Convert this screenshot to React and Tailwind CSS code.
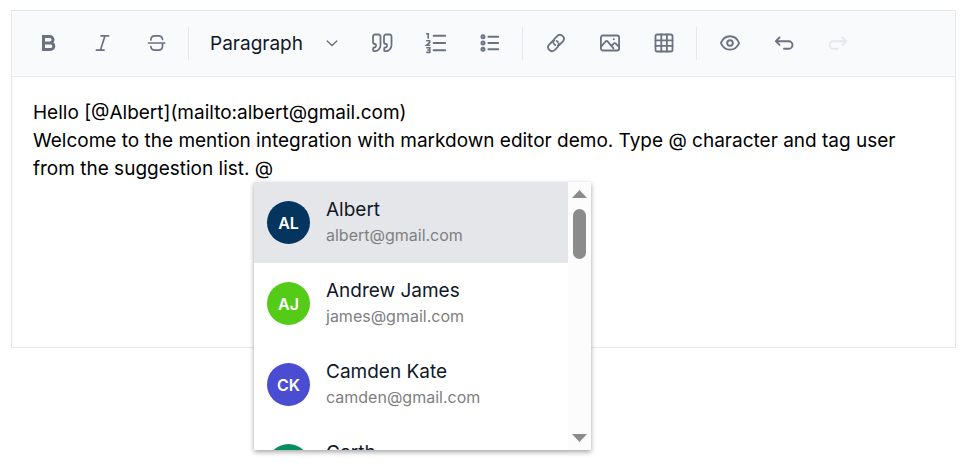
import React from "react";

function Icon({ children, width = 2 }) {
  return (
    <svg
      className="size-6"
      viewBox="0 0 24 24"
      fill="none"
      stroke="currentColor"
      strokeWidth={width}
      strokeLinecap="round"
      strokeLinejoin="round"
      aria-hidden="true"
    >
      {children}
    </svg>
  );
}

function ToolButton({ label, disabled, children }) {
  return (
    <button
      type="button"
      aria-label={label}
      title={label}
      disabled={disabled}
      className="flex h-11 w-11 shrink-0 items-center justify-center rounded-md text-gray-500 disabled:text-gray-200"
    >
      {children}
    </button>
  );
}

function Separator() {
  return <div className="h-[33px] w-0.5 shrink-0 border-l border-gray-200" />;
}

function Toolbar() {
  return (
    <div className="border-b border-gray-200">
      <div
        className="flex h-[65px] items-center gap-2.5 overflow-hidden rounded-md bg-[#f9fafc] px-3.5 pb-px"
        role="toolbar"
        aria-label="Formatting"
      >
        <ToolButton label="Bold">
          <Icon width={3}>
            <path d="M7.5 5.500h6.300a3.200 3.200 0 0 1 0 6.400H7.500zM7.500 11.900h7a3.300 3.300 0 0 1 0 6.600h-7z" strokeLinejoin="miter" />
          </Icon>
        </ToolButton>
        <ToolButton label="Italic">
          <Icon width={1.7}>
            <path d="M11 4.8h7.600M6.400 19.2h7.600M15 4.8l-4.6 14.4" />
          </Icon>
        </ToolButton>
        <ToolButton label="Strikethrough">
          <Icon width={1.7}>
            <path d="M4.500 12h16.200M6.900 9V8.400a3.600 3.600 0 0 1 3.600-3.600h4.400a3.600 3.600 0 0 1 3.600 3.600M6.900 15.600a3.600 3.600 0 0 0 3.600 3.600h4.400a3.600 3.600 0 0 0 3.600-3.600V12.400" />
          </Icon>
        </ToolButton>
        <Separator />
        <div className="relative h-11 w-[150px] shrink-0">
          <select
            aria-label="Paragraph format"
            defaultValue="Paragraph"
            className="h-full w-full appearance-none bg-transparent pt-px pl-2.5 text-[19px] leading-7 text-gray-900 outline-none"
          >
            <option>Paragraph</option>
            <option>Heading 1</option>
            <option>Heading 2</option>
          </select>
          <svg
            className="pointer-events-none absolute top-4 right-3 h-3 w-3 text-gray-500"
            viewBox="0 0 12 12"
            fill="none"
            stroke="currentColor"
            strokeWidth="1.4"
            strokeLinecap="round"
            strokeLinejoin="round"
            aria-hidden="true"
          >
            <path d="M1.200 4l4.800 4.500L10.800 4" />
          </svg>
        </div>
        <ToolButton label="Quote">
          <Icon width={1.8}>
            <path d="M16 3.500a2 2 0 0 0-2 2v5.500a2 2 0 0 0 2 2 1 1 0 0 1 1 1v.8a1.700 1.700 0 0 1-1.800 1.700 1 1 0 0 0-1 1v1.700a1 1 0 0 0 1 1 6 6 0 0 0 6.300-6V5.500a2 2 0 0 0-2-2z" />
            <path d="M5 3.500a2 2 0 0 0-2 2v5.500a2 2 0 0 0 2 2 1 1 0 0 1 1 1v.8a1.700 1.700 0 0 1-1.800 1.700 1 1 0 0 0-1 1v1.700a1 1 0 0 0 1 1 6 6 0 0 0 6.300-6V5.500a2 2 0 0 0-2-2z" />
          </Icon>
        </ToolButton>
        <ToolButton label="Numbered list">
          <Icon width={1.9}>
            <path d="M9.600 4.700h11.600M9.600 12h11.600M9.600 19.200h11.600" />
            <path
              d="M2 2.800h2.200v5M2.200 9.800h3.400v1.800l-3 2.600h3.600M2.200 16.800h3.600v4.600H2.200M3.400 19h2.400"
              strokeWidth="1.600"
              strokeLinecap="butt"
              strokeLinejoin="miter"
            />
          </Icon>
        </ToolButton>
        <ToolButton label="Bulleted list">
          <Icon width={2}>
            <path d="M10.400 5.700h9.800M10.400 12h9.800M10.400 18.300h9.800" />
            <circle cx="5" cy="5.700" r="1.500" />
            <circle cx="5" cy="12" r="1.500" />
            <circle cx="5" cy="18.300" r="1.500" />
          </Icon>
        </ToolButton>
        <Separator />
        <ToolButton label="Insert link">
          <Icon width={1.8}>
            <path d="M10.200 13a4.300 4.300 0 0 0 1 1.100M13.800 14.600a4.200 4.200 0 0 0 2-1.100l3.100-3.100a3.900 3.900 0 0 0-5.500-5.500l-3.200 3.200a4 4 0 0 0-.9 3.600" />
            <path d="M10.200 9.400a4.200 4.200 0 0 0-2 1.100l-3.100 3.100a3.900 3.900 0 0 0 5.500 5.500l3.200-3.200a4 4 0 0 0 .9-3.600" />
            <path d="M12.700 9.900a4 4 0 0 1 1.100 1.100" />
          </Icon>
        </ToolButton>
        <ToolButton label="Insert image">
          <Icon width={1.8}>
            <rect x="2.900" y="4.500" width="18.200" height="15" rx="2" />
            <path d="M3.200 15.500l4.500-5.200a1.200 1.200 0 0 1 1.800 0l6 7M13.600 14.800l2.300-2.400a1.200 1.200 0 0 1 1.700 0l3.300 3.500" />
            <circle cx="15.800" cy="8.300" r="1" fill="currentColor" stroke="none" />
          </Icon>
        </ToolButton>
        <ToolButton label="Insert table">
          <Icon width={1.8}>
            <rect x="3.500" y="3.500" width="17" height="17" rx="1.800" />
            <path d="M3.500 9.300h17M3.500 14.900h17M9.300 3.500v17M14.900 3.500v17" />
          </Icon>
        </ToolButton>
        <Separator />
        <ToolButton label="Preview">
          <Icon width={1.900}>
            <path d="M2.900 12C4.500 8 7.800 5.200 12 5.200S19.500 8 21.100 12C19.500 16 16.200 18.600 12 18.600S4.500 16 2.900 12z" />
            <circle cx="12" cy="12" r="2.800" />
          </Icon>
        </ToolButton>
        <ToolButton label="Undo">
          <Icon width={1.900}>
            <path d="M7.500 6.500L3.800 10.200l3.700 3.700M4 10.200h12.700a3.800 3.800 0 0 1 0 7.600H12" />
          </Icon>
        </ToolButton>
        <ToolButton label="Redo" disabled>
          <Icon width={1.900}>
            <path d="M16.500 6.500l3.700 3.700-3.700 3.700M20 10.200H7.300a3.800 3.800 0 0 0 0 7.600H12" />
          </Icon>
        </ToolButton>
      </div>
    </div>
  );
}

const people = [
  { initials: "AL", name: "Albert", email: "albert@gmail.com", color: "bg-[#03355f]", active: true },
  { initials: "AJ", name: "Andrew James", email: "james@gmail.com", color: "bg-[#53cb17]" },
  { initials: "CK", name: "Camden Kate", email: "camden@gmail.com", color: "bg-[#4a4dd1]" },
  { initials: "GA", name: "Garth", email: "garth@gmail.com", color: "bg-[#058e60]" },
];

function MentionPopup() {
  return (
    <div className="absolute top-[105px] left-[242px] flex h-[268px] w-[337px] bg-white shadow-[0_2px_5px_rgba(0,0,0,0.36)]">
      <ul className="min-w-0 flex-1 overflow-hidden" role="listbox" aria-label="Suggestions">
        {people.map((p) => (
          <li
            key={p.email}
            role="option"
            aria-selected={!!p.active}
            className={`flex h-[81px] items-center gap-4 pl-[13px] ${p.active ? "bg-[#e5e6ea]" : "bg-white"}`}
          >
            <span
              className={`flex size-[43px] shrink-0 items-center justify-center rounded-full text-base font-semibold text-white ${p.color}`}
            >
              {p.initials}
            </span>
            <span className="flex flex-col pb-0.5">
              <span className="text-[19px] leading-[26px] text-gray-900">{p.name}</span>
              <span className="text-base leading-6 text-[#808080]">{p.email}</span>
            </span>
          </li>
        ))}
      </ul>
      <div className="flex w-[23px] flex-col items-center bg-[#fcfcfc] py-2" aria-hidden="true">
        <svg className="h-2 w-[15px]" viewBox="0 0 15 8" fill="#8b8b8b">
          <path d="M7.500 0L15 8H0z" />
        </svg>
        <div className="mt-[11px] h-[50px] w-[13px] rounded-full bg-[#8b8b8b]" />
        <svg className="mt-auto h-2 w-[15px]" viewBox="0 0 15 8" fill="#8b8b8b">
          <path d="M0 0h15L7.500 8z" />
        </svg>
      </div>
    </div>
  );
}

export default function App() {
  return (
    <main className="min-h-screen bg-white px-[11px] pt-2.5 font-['Inter',sans-serif]">
      <div className="border border-gray-200">
        <Toolbar />
        <div className="relative">
          <textarea
            aria-label="Markdown editor"
            spellCheck={false}
            className="block h-[270px] w-full resize-none overflow-hidden bg-transparent px-[21px] pt-[22px] text-[19px] leading-7 text-black outline-none"
            defaultValue={
              "Hello [@Albert](mailto:albert@gmail.com)\nWelcome to the mention integration with markdown editor demo. Type @ character and tag user from the suggestion list. @"
            }
          />
          <MentionPopup />
        </div>
      </div>
    </main>
  );
}
